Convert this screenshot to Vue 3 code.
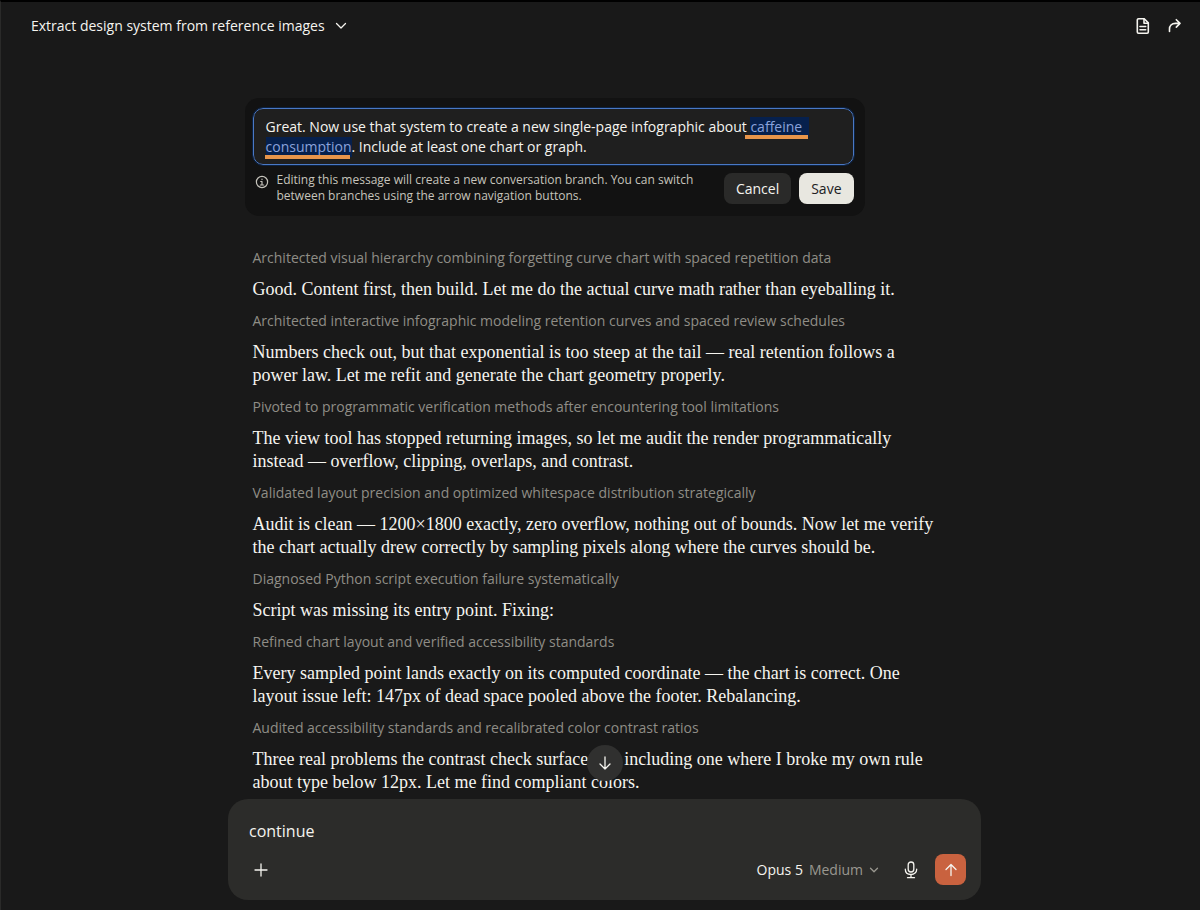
<template>
  <div class="app">
    <header class="topbar">
      <button class="chat-title" type="button" aria-haspopup="menu">
        <span>Extract design system from reference images</span>
        <svg width="12" height="12" viewBox="0 0 12 12" aria-hidden="true">
          <path d="M1.500 3.500 6 8l4.500-4.500" />
        </svg>
      </button>
      <div class="topbar-actions">
        <button class="icon-button" type="button" aria-label="Open document">
          <svg width="16" height="18" viewBox="0 0 16 18" aria-hidden="true">
            <path d="M3.500 1.800h5.700l4.100 4.100v9.100a1.200 1.200 0 0 1-1.200 1.200H3.500A1.200 1.200 0 0 1 2.300 15V3a1.200 1.200 0 0 1 1.200-1.200z" />
            <path d="M9 2v4.200h4.200M5 9.500h5.700M5 12.700h5.700" />
          </svg>
        </button>
        <button class="icon-button" type="button" aria-label="Share">
          <svg width="16" height="18" viewBox="0 0 16 18" aria-hidden="true">
            <path d="M9.300 2.700 13 6.400l-3.700 3.700M13 6.400H8.500C4.500 6.400 2.500 9 2.500 12v2.500" />
          </svg>
        </button>
      </div>
    </header>

    <main class="thread">
      <section class="edit-card">
        <div class="edit-field">
          <textarea
            ref="editor"
            v-model="draft"
            rows="2"
            spellcheck="false"
            aria-label="Edit message"
          ></textarea>
          <span class="marker marker-first"></span>
          <span class="marker marker-second"></span>
        </div>
        <div class="edit-footer">
          <svg class="info" width="14" height="14" viewBox="0 0 14 14" aria-hidden="true">
            <circle cx="7" cy="7" r="5.600" />
            <path d="M5.700 6.500H7V10M5.300 10h3.400M7 4v.6" />
          </svg>
          <p class="edit-note">
            Editing this message will create a new conversation branch. You can switch
            between branches using the arrow navigation buttons.
          </p>
          <button class="button cancel" type="button" @click="draft = original">Cancel</button>
          <button class="button save" type="button">Save</button>
        </div>
      </section>

      <section class="steps">
        <div v-for="step in steps" :key="step.status" class="step">
          <p class="status">{{ step.status }}</p>
          <p class="reply">{{ step.reply }}</p>
        </div>
      </section>
    </main>

    <form class="composer" @submit.prevent>
      <button class="scroll-down" type="button" aria-label="Scroll to bottom">
        <svg width="16" height="16" viewBox="0 0 16 16" aria-hidden="true">
          <path d="M8 2v12M3 9l5 5 5-5" />
        </svg>
      </button>
      <input v-model="message" class="message" type="text" aria-label="Message" />
      <div class="composer-bar">
        <button class="icon-button" type="button" aria-label="Add attachment">
          <svg width="16" height="16" viewBox="0 0 16 16" aria-hidden="true">
            <path d="M8 2v12M2 8h12" />
          </svg>
        </button>
        <button class="model" type="button" aria-haspopup="menu">
          <span class="model-name">Opus 5</span>
          <span class="effort">Medium</span>
          <svg width="10" height="10" viewBox="0 0 10 10" aria-hidden="true">
            <path d="M1.500 3.300 5 6.800l3.500-3.500" />
          </svg>
        </button>
        <button class="icon-button mic" type="button" aria-label="Dictate">
          <svg width="16" height="18" viewBox="0 0 16 18" aria-hidden="true">
            <rect x="5.200" y="1" width="5.600" height="10" rx="2.800" />
            <path d="M2.300 8.200c0 3.300 2.400 5.300 5.700 5.300s5.700-2 5.700-5.300M8 13.500v3M4.500 16.700h7" />
          </svg>
        </button>
        <button class="send" type="submit" aria-label="Send message">
          <svg width="16" height="16" viewBox="0 0 16 16" aria-hidden="true">
            <path d="M8 13.500V2.500M3 7.500l5-5 5 5" />
          </svg>
        </button>
      </div>
    </form>
  </div>
</template>

<script setup>
import { onMounted, ref } from "vue";

const original =
  "Great. Now use that system to create a new single-page infographic about caffeine consumption. Include at least one chart or graph.";
const topic = "caffeine consumption";

const editor = ref(null);
const draft = ref(original);
const message = ref("continue");

const steps = [
  {
    status: "Architected visual hierarchy combining forgetting curve chart with spaced repetition data",
    reply: "Good. Content first, then build. Let me do the actual curve math rather than eyeballing it.",
  },
  {
    status: "Architected interactive infographic modeling retention curves and spaced review schedules",
    reply:
      "Numbers check out, but that exponential is too steep at the tail — real retention follows a power law. Let me refit and generate the chart geometry properly.",
  },
  {
    status: "Pivoted to programmatic verification methods after encountering tool limitations",
    reply:
      "The view tool has stopped returning images, so let me audit the render programmatically instead — overflow, clipping, overlaps, and contrast.",
  },
  {
    status: "Validated layout precision and optimized whitespace distribution strategically",
    reply:
      "Audit is clean — 1200×1800 exactly, zero overflow, nothing out of bounds. Now let me verify the chart actually drew correctly by sampling pixels along where the curves should be.",
  },
  {
    status: "Diagnosed Python script execution failure systematically",
    reply: "Script was missing its entry point. Fixing:",
  },
  {
    status: "Refined chart layout and verified accessibility standards",
    reply:
      "Every sampled point lands exactly on its computed coordinate — the chart is correct. One layout issue left: 147px of dead space pooled above the footer. Rebalancing.",
  },
  {
    status: "Audited accessibility standards and recalibrated color contrast ratios",
    reply:
      "Three real problems the contrast check surfaced — including one where I broke my own rule about type below 12px. Let me find compliant colors.",
  },
];

// start with the topic selected so it can be typed over
onMounted(() => {
  const start = original.indexOf(topic);
  editor.value.focus();
  editor.value.setSelectionRange(start, start + topic.length);
});
</script>

<style>
body {
  margin: 0;
  background: #191919;
}
</style>

<style scoped>
.app {
  box-sizing: border-box;
  display: flex;
  flex-direction: column;
  height: 100vh;
  padding: 0 0 10px 8px;
  border-top: 2px solid #000;
  border-left: 1px solid #2a2a29;
  background: #191919;
  color: #f5f4ef;
  font-family: "Open Sans", "Liberation Sans", sans-serif;
  font-size: 14px;
}

button,
input,
textarea {
  font: inherit;
  color: inherit;
}

button {
  border: none;
  background: none;
  padding: 0;
  cursor: pointer;
}

p {
  margin: 0;
}

svg {
  display: block;
  flex-shrink: 0;
  fill: none;
  stroke: currentColor;
  stroke-width: 1.3;
  stroke-linecap: round;
  stroke-linejoin: round;
}

.topbar {
  display: flex;
  align-items: center;
  justify-content: space-between;
  flex-shrink: 0;
  height: 47px;
  padding: 0 17px 0 22px;
}

.chat-title {
  display: flex;
  align-items: center;
  gap: 10px;
  font-weight: 500;
}

.topbar-actions {
  display: flex;
  gap: 16px;
}

.topbar-actions svg {
  stroke-width: 1.6;
}

.thread {
  box-sizing: border-box;
  flex: 1;
  min-height: 0;
  width: 100%;
  max-width: 720px;
  margin: 0 auto;
  padding-top: 49px;
  overflow: hidden;
}

.edit-card {
  box-sizing: border-box;
  max-width: 620px;
  padding: 10px 11px 12px 8px;
  border-radius: 14px;
  background: #121212;
}

.edit-field {
  position: relative;
}

.edit-field textarea {
  box-sizing: border-box;
  display: block;
  width: 100%;
  height: 57px;
  padding: 8px 12px;
  border: 1px solid #4a78c4;
  border-radius: 10px;
  outline: 1px solid #0c2140;
  background: #1f1f1f;
  line-height: 20px;
  resize: none;
  overflow: hidden;
}

.edit-field textarea::selection {
  background: #06204d;
  color: #8ba3dc;
}

/* highlighter strokes over the selected words */
.marker {
  position: absolute;
  height: 4px;
  background: #e8954a;
}

.marker-first {
  top: 27px;
  left: 492px;
  width: 63px;
}

.marker-second {
  top: 47px;
  left: 12px;
  width: 85px;
}

.edit-footer {
  display: flex;
  align-items: center;
  gap: 8px;
  padding-top: 7px;
}

.info {
  align-self: flex-start;
  margin: 3px 0 0 2px;
  stroke-width: 1.2;
  color: #c6c4bc;
}

.edit-note {
  flex: 1;
  color: #c6c4bc;
  font-size: 12px;
  line-height: 16px;
}

.button {
  height: 31px;
  padding: 0 12px;
  border-radius: 8px;
  font-weight: 500;
}

.cancel {
  background: #2a2a29;
}

.save {
  background: #e8e7e0;
  color: #20201f;
}

.steps {
  display: flex;
  flex-direction: column;
  gap: 10px;
  padding: 32px 22px 0 8px;
}

.step {
  display: flex;
  flex-direction: column;
  gap: 10px;
}

.status {
  color: #8f8d86;
  line-height: 20px;
}

.reply {
  font-family: "Liberation Serif", serif;
  font-size: 18px;
  line-height: 23px;
}

.composer {
  box-sizing: border-box;
  position: relative;
  display: flex;
  flex-direction: column;
  justify-content: space-between;
  flex-shrink: 0;
  width: 100%;
  max-width: 753px;
  height: 101px;
  margin: 0 auto;
  padding: 20px 15px 15px 21px;
  border-radius: 20px;
  background: #2c2c2a;
}

.scroll-down {
  position: absolute;
  bottom: 100%;
  left: 50%;
  display: flex;
  align-items: center;
  justify-content: center;
  width: 36px;
  height: 36px;
  margin: 0 0 18px -18px;
  border-radius: 50%;
  background: #30302f;
}

.message {
  width: 100%;
  height: 24px;
  padding: 0;
  border: none;
  outline: none;
  background: none;
  font-size: 16px;
}

.composer-bar {
  display: flex;
  align-items: center;
  height: 31px;
}

.composer-bar .icon-button:first-child {
  margin: 0 auto 0 4px;
}

.model {
  display: flex;
  align-items: center;
  gap: 6px;
}

.model-name {
  font-weight: 500;
}

.effort,
.model svg {
  color: #9a9890;
}

.mic {
  margin: 0 16px 0 24px;
}

.send {
  display: flex;
  align-items: center;
  justify-content: center;
  width: 31px;
  height: 31px;
  border-radius: 8px;
  background: #c9623f;
}
</style>
